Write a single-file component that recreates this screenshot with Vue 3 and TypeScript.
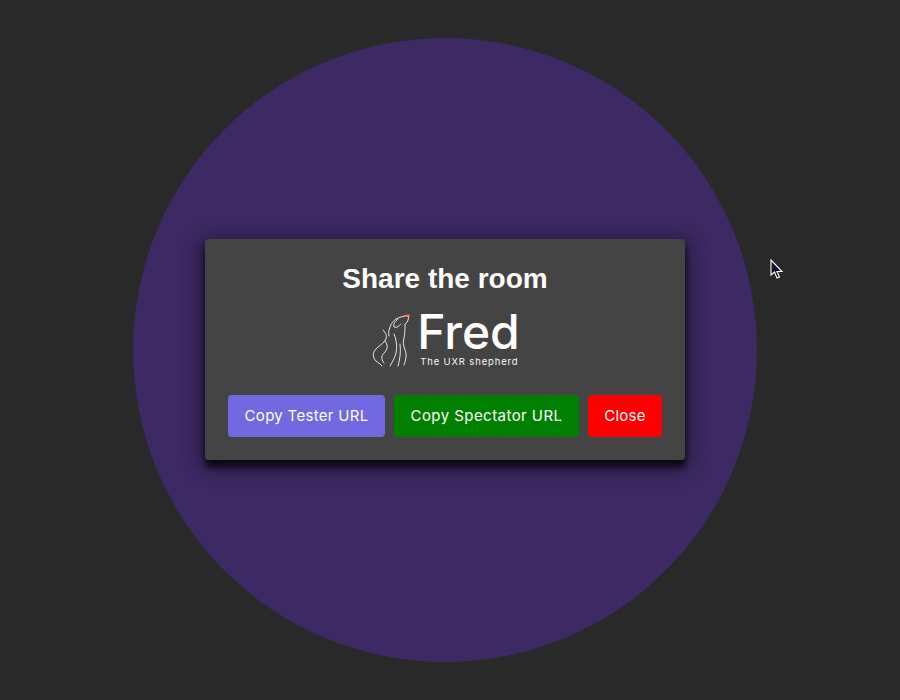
<script setup lang="ts">
const buttons = [
  { label: 'Copy Tester URL', kind: 'tester' },
  { label: 'Copy Spectator URL', kind: 'spectator' },
  { label: 'Close', kind: 'close' },
]
</script>

<template>
  <div class="stage">
    <div class="circle"></div>
    <section class="modal">
      <h1 class="title">Share the room</h1>
      <div class="logo">
        <svg class="wolf" width="40" height="54" viewBox="0 0 40 54" fill="none" stroke="#f8f8f8" stroke-width="0.9" stroke-linecap="round" stroke-linejoin="round">
          <path d="M36 2 C32 2 27 3 24 5 C21 7 19 10 18 13 C17 16 16 18 17 22" />
          <path d="M36.500 2 C37 6 35 9 33 10 C33 14 33 19 32 24 C31 28 31 31 33 36 C35 40 34 46 32 51" />
          <path d="M26 5 C23 7 21 10 22 13 C25 14 27 12 29 10" />
          <path d="M11 16 C14 19 15 22 14 25 C12 29 8 31 4 35 C0 39 1 44 4 47 C6 49 9 50 10 52" />
          <path d="M13 27 C16 31 16 34 13 38 C10 41 8 44 12 49" />
          <path d="M22 20 C25 27 25 34 24 39 C23 44 20 48 18 52" />
          <path d="M28 30 C29 38 28 45 26 52" />
          <path d="M32.500 2 L37 1.500" stroke="#ff6b5e" stroke-width="2" />
        </svg>
        <div class="brand">
          <span class="name">Fred</span>
          <span class="tagline">The UXR shepherd</span>
        </div>
      </div>
      <div class="actions">
        <button v-for="b in buttons" :key="b.kind" class="btn" :class="b.kind" type="button">{{ b.label }}</button>
      </div>
    </section>
    <svg class="cursor" width="14" height="21" viewBox="0 0 14 21">
      <path d="M1 1 L1 16 L4.500 13 L7 19 L9.500 18 L7 12.500 L12 12.500 Z" fill="#11112a" stroke="#fff" stroke-width="1.100" stroke-linejoin="miter" />
    </svg>
  </div>
</template>

<style>
html, body { margin: 0; background: #292929; }
</style>

<style scoped>
.stage {
  position: relative;
  width: 900px;
  height: 700px;
  box-sizing: border-box;
  padding-right: 10px;
  background: #292929;
  display: grid;
  grid-template-rows: 700px;
  place-items: center;
  overflow: hidden;
}
.circle {
  grid-area: 1 / 1;
  width: 624px;
  height: 624px;
  border-radius: 50%;
  background: #3d2963;
}
.modal {
  grid-area: 1 / 1;
  z-index: 1;
  width: 480px;
  height: 221px;
  margin-bottom: 1px;
  box-sizing: border-box;
  padding-top: 24px;
  background: #444444;
  border-radius: 4px;
  box-shadow: 0 7px 6px rgba(0, 0, 0, 0.72), 0 4px 20px 4px rgba(0, 0, 0, 0.45);
  display: flex;
  flex-direction: column;
  align-items: center;
}
.title {
  margin: 0;
  font: 700 28px/32px "Liberation Sans", Arial, sans-serif;
  color: #fff;
}
.logo {
  margin-top: 12px;
  margin-left: 2px;
  height: 60px;
  display: flex;
  align-items: flex-start;
  gap: 5px;
}
.wolf { margin-top: 7px; }
.brand {
  margin-top: 1px;
  display: flex;
  flex-direction: column;
  align-items: flex-start;
}
.name {
  font: 500 48px/48px Inter, Roboto, sans-serif;
  color: #fff;
}
.tagline {
  margin-top: 1px;
  margin-left: 3px;
  font: 400 9.500px/9px Inter, Roboto, sans-serif;
  letter-spacing: 0.85px;
  color: #f8f8f8;
  white-space: nowrap;
}
.actions {
  margin-top: 28px;
  display: flex;
  gap: 9px;
}
.btn {
  height: 42px;
  padding: 0;
  border: 0;
  border-radius: 4px;
  color: #fff;
  font: 400 15px/42px Inter, "Open Sans", sans-serif;
  letter-spacing: 0.3px;
  white-space: nowrap;
}
.tester { width: 157px; background: #7269e0; }
.spectator { width: 185px; background: #008000; letter-spacing: 0.45px; }
.close { width: 74px; background: #ff0000; }
.cursor {
  position: absolute;
  left: 770px;
  top: 259px;
}
</style>
